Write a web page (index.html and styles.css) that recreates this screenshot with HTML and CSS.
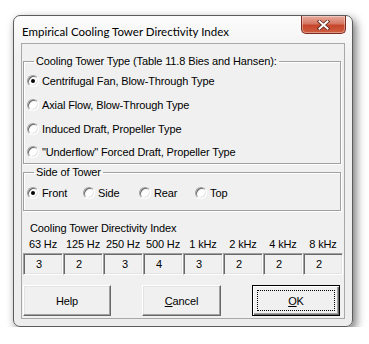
FILE: index.html
```html
<!DOCTYPE html>
<html lang="en">
<head>
    <meta charset="UTF-8">
    <meta name="viewport" content="width=device-width, initial-scale=1.0">
    <title>Empirical Cooling Tower Directivity Index</title>
    <link rel="stylesheet" href="styles.css">
</head>
<body>
    <div class="window">
        <div class="titlebar">
            <span class="title">Empirical Cooling Tower Directivity Index</span>
            <button class="close" aria-label="Close">
                <svg width="13" height="10" viewBox="0 0 13 10">
                    <path d="M2.5 1.5 L10.5 8.5 M10.5 1.5 L2.5 8.5" stroke="#5a2218" stroke-width="3.6" stroke-linecap="square"/>
                    <path d="M2.5 1.5 L10.5 8.5 M10.5 1.5 L2.5 8.5" stroke="#fff" stroke-width="2" stroke-linecap="square"/>
                </svg>
            </button>
        </div>

        <div class="client">
            <fieldset class="group type">
                <legend>Cooling Tower Type (Table 11.8 Bies and Hansen):</legend>
                <label class="option"><span class="radio checked"></span>Centrifugal Fan, Blow-Through Type</label>
                <label class="option"><span class="radio"></span>Axial Flow, Blow-Through Type</label>
                <label class="option"><span class="radio"></span>Induced Draft, Propeller Type</label>
                <label class="option"><span class="radio"></span>"Underflow" Forced Draft, Propeller Type</label>
            </fieldset>

            <fieldset class="group side">
                <legend>Side of Tower</legend>
                <div class="side-row">
                    <label class="option"><span class="radio checked"></span>Front</label>
                    <label class="option"><span class="radio"></span>Side</label>
                    <label class="option"><span class="radio"></span>Rear</label>
                    <label class="option"><span class="radio"></span>Top</label>
                </div>
            </fieldset>

            <div class="index-label">Cooling Tower Directivity Index</div>
            <div class="bands">
                <span>63 Hz</span>
                <span>125 Hz</span>
                <span>250 Hz</span>
                <span>500 Hz</span>
                <span>1 kHz</span>
                <span>2 kHz</span>
                <span>4 kHz</span>
                <span>8 kHz</span>
            </div>
            <div class="values">
                <div class="value">3</div>
                <div class="value">2</div>
                <div class="value wide">3</div>
                <div class="value">4</div>
                <div class="value">3</div>
                <div class="value">2</div>
                <div class="value">2</div>
                <div class="value">2</div>
            </div>

            <div class="actions">
                <button class="btn help">Help</button>
                <button class="btn cancel"><span class="key">C</span>ancel</button>
                <button class="btn ok"><span class="focus"><span class="key">O</span>K</span></button>
            </div>
        </div>
    </div>
</body>
</html>
```

FILE: styles.css
```css
* {
    box-sizing: border-box;
}

body {
    margin: 0;
    background: #fff;
    font-family: "Liberation Sans", Arial, sans-serif;
    font-size: 11px;
    letter-spacing: -0.12px;
    color: #000;
}

.window {
    margin: 15px 0 0 13px;
    width: 340px;
    height: 312px;
    border: 1px solid #5c5c5c;
    border-radius: 7px;
    background: linear-gradient(#fcfcfc, #f1f1f1 40px, #ededed);
    box-shadow: 3px 4px 10px rgba(0,0,0,0.55);
}

.titlebar {
    display: flex;
    align-items: flex-start;
    height: 27px;
    padding-left: 8px;
}

.title {
    font-family: Lato, "Liberation Sans", sans-serif;
    font-size: 11.5px;
    letter-spacing: 0;
    line-height: 27px;
    padding-top: 2px;
}

.close {
    margin: 0 6px 0 auto;
    width: 45px;
    height: 18px;
    padding: 0;
    border: 1px solid #7a2c20;
    border-top: none;
    border-radius: 0 0 5px 5px;
    background: linear-gradient(#e9ab9d, #d67863 45%, #c5462c 55%, #cf5f40);
    box-shadow: inset 0 0 0 1px rgba(255,255,255,0.35);
    display: flex;
    align-items: center;
    justify-content: center;
}

.client {
    margin: 0 7px;
    height: 276px;
    border: 1px solid #a8a8a8;
    background: #f0f0f0;
    padding: 0 3px 0 1px;
}

.group {
    margin: 11px 0 0;
    padding: 0;
    min-width: 0;
    border: 1px solid #a0a0a0;
    box-shadow: 1px 1px 0 #fff, inset 1px 1px 0 #fff;
}

.group legend {
    margin-left: 10px;
    padding: 0 2px;
    line-height: 13px;
}

.type {
    padding-top: 1px;
}

.option {
    display: flex;
    align-items: center;
    height: 24px;
    padding-left: 3px;
}

.type .option:last-child {
    height: 22px;
}

.radio {
    width: 12px;
    height: 12px;
    margin-right: 3px;
    border-radius: 50%;
    border: 1px solid;
    border-color: #a0a0a0 #fff #fff #a0a0a0;
    background: #fff;
    box-shadow: inset 1px 1px 0 #696969, inset -1px -1px 0 #e3e3e3;
    display: flex;
    align-items: center;
    justify-content: center;
}

.radio.checked::after {
    content: "";
    width: 4px;
    height: 4px;
    border-radius: 50%;
    background: #000;
}

.side {
    margin-top: 2px;
    padding-bottom: 4px;
}

.side-row {
    display: flex;
    padding-top: 1px;
}

.side-row .option {
    width: 56px;
    height: 26px;
}

.index-label {
    margin-top: 11px;
    padding-left: 7px;
    line-height: 13px;
}

.bands {
    display: grid;
    grid-template-columns: repeat(8, 40px);
    margin-top: 3px;
    line-height: 13px;
    text-align: center;
}

.values {
    display: grid;
    grid-template-columns: repeat(8, 40px);
    margin-top: 2px;
}

.value {
    height: 22px;
    line-height: 20px;
    padding-left: 12px;
    border: 1px solid;
    border-color: #a0a0a0 #fff #fff #a0a0a0;
    box-shadow: inset 1px 1px 0 #696969, inset -1px -1px 0 #e3e3e3;
}

.value.wide {
    padding-left: 18px;
}

.actions {
    display: flex;
    justify-content: space-between;
    margin-top: 10px;
    padding-right: 1px;
}

.btn {
    height: 31px;
    width: 88px;
    padding: 0;
    font-family: inherit;
    font-size: 11px;
    letter-spacing: inherit;
    color: #000;
    background: #f0f0f0;
    border: 1px solid;
    border-color: #fff #696969 #696969 #fff;
    box-shadow: inset -1px -1px 0 #a0a0a0, inset 1px 1px 0 #e3e3e3;
}

.cancel {
    width: 79px;
}

.ok {
    border: 1px solid #000;
    box-shadow: inset 1px 1px 0 #fff, inset -1px -1px 0 #696969, inset -2px -2px 0 #a0a0a0;
    padding: 4px;
}

.focus {
    display: flex;
    align-items: center;
    justify-content: center;
    height: 100%;
    border: 1px dotted #000;
}

.key {
    text-decoration: underline;
}
```
